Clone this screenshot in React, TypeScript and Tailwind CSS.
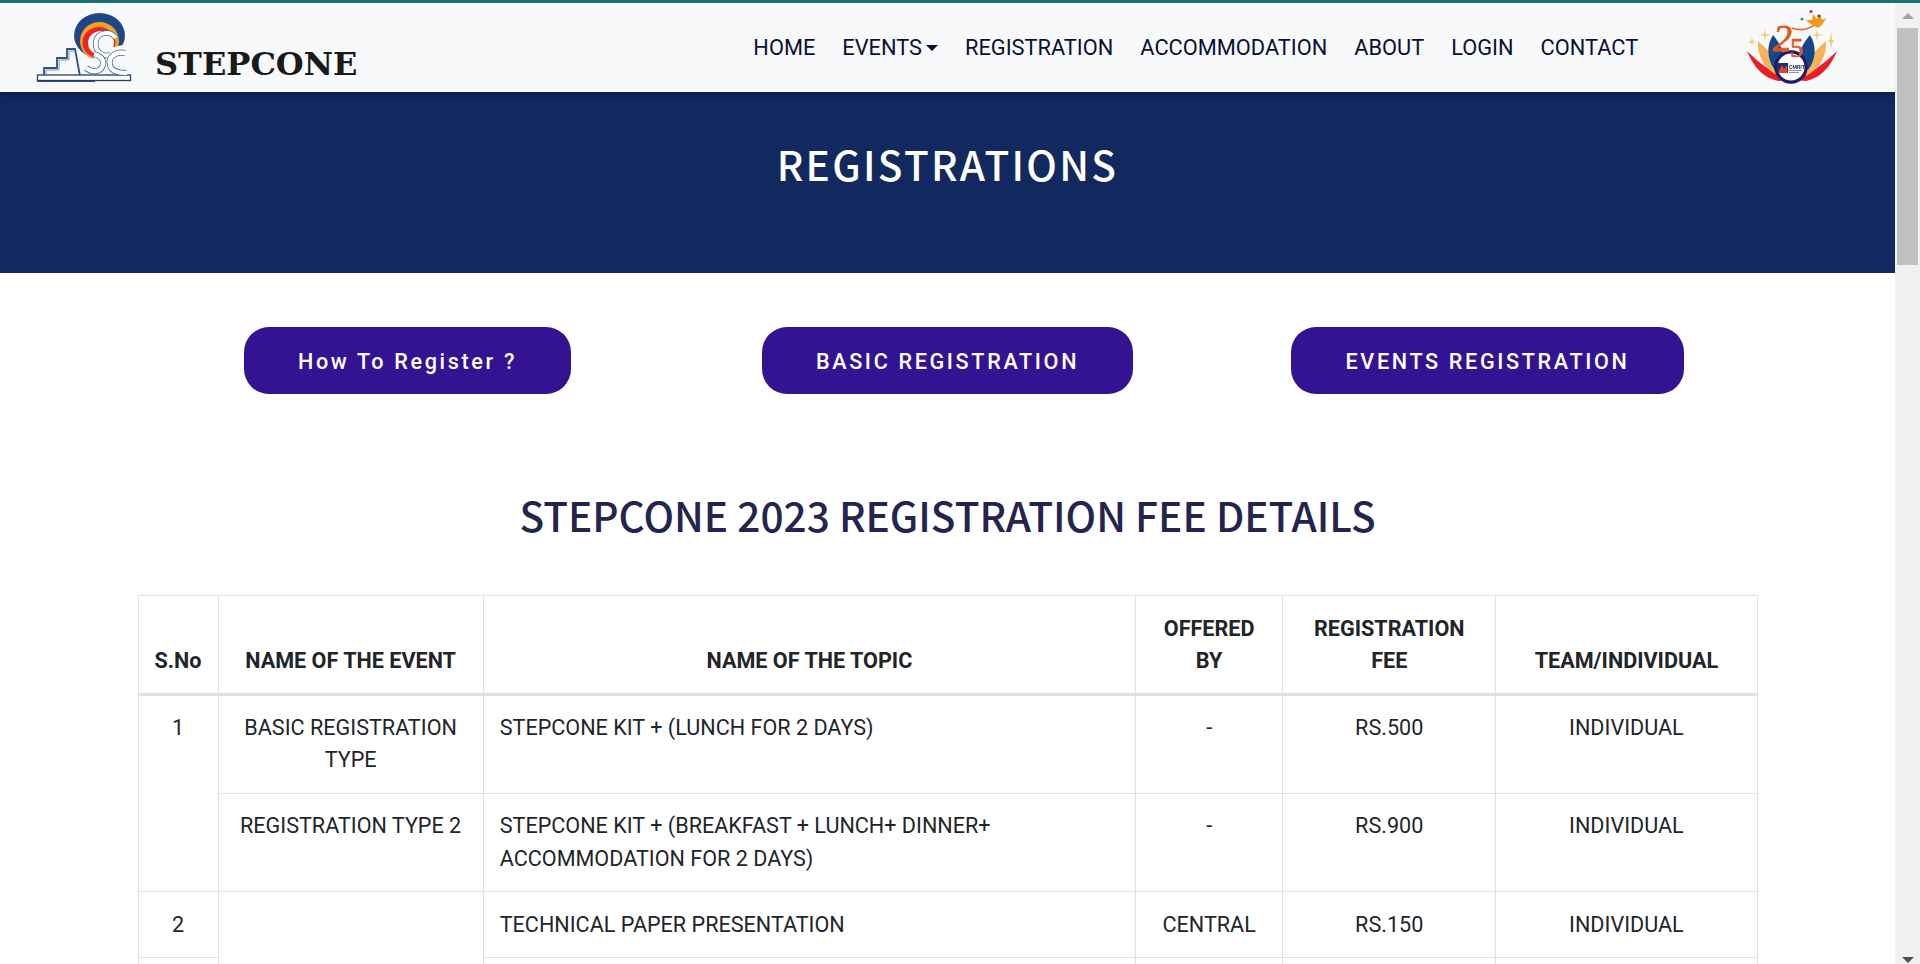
import React from "react";

function StepconeLogo() {
  return (
    <svg width="110" height="80" viewBox="0 0 110 80" className="shrink-0 blur-[0.4px]">
      <ellipse cx="69.5" cy="27.5" rx="25.5" ry="22.5" fill="#1f4788" />
      <ellipse cx="69.5" cy="33" rx="19.5" ry="19" fill="#f2a31d" />
      <ellipse cx="69" cy="34.5" rx="16.5" ry="15.5" fill="#e8262a" />
      <ellipse cx="71" cy="35" rx="13" ry="12" fill="#f8f9fa" />
      <path d="M62 53L66 45L84 39L97 36V62H62Z" fill="#f8f9fa" />
      <path d="M45 41H37V50H27V60H14V68H8V73H64V68H50Z" fill="#f8f9fa" stroke="#2f5088" strokeWidth="1.8" />
      <path d="M16 66V62H29V52H39V43H44" fill="none" stroke="#7f97bd" strokeWidth="1" />
      <rect x="7.5" y="67" width="93" height="5.5" fill="#ffffff" stroke="#1f3f75" strokeWidth="1.3" />
      <path d="M86 30C80 22 68 24 66 33C64 43 72 49 80 47" fill="none" stroke="#3b6aa8" strokeWidth="5.5" />
      <path d="M86 30C80 22 68 24 66 33C64 43 72 49 80 47" fill="none" stroke="#ffffff" strokeWidth="4" />
      <path d="M56 60C64 66 72 63 73 56C74 50 68 47 64 46" fill="none" stroke="#3b6aa8" strokeWidth="6" />
      <path d="M56 60C64 66 72 63 73 56C74 50 68 47 64 46" fill="none" stroke="#ffffff" strokeWidth="4.5" />
      <path d="M95 45C84 43 78 50 80 57C81 63 88 65 97 65" fill="none" stroke="#3b6aa8" strokeWidth="6" />
      <path d="M95 45C84 43 78 50 80 57C81 63 88 65 97 65" fill="none" stroke="#ffffff" strokeWidth="4.5" />
    </svg>
  );
}

function AnniversaryLogo() {
  return (
    <svg width="110" height="80" viewBox="0 0 110 80" className="shrink-0 blur-[0.3px]">
      <path d="M7 43C14 60 24 70 38 73L50 72C34 66 20 56 7 43Z" fill="#ee1c25" />
      <path d="M97 43C90 60 80 70 66 73L54 72C70 66 84 56 97 43Z" fill="#ee1c25" />
      <path d="M18 33C17 48 24 60 38 68L40 55C34 48 26 40 18 33Z" fill="#fbb25a" />
      <path d="M86 33C87 48 80 60 66 68L64 55C70 48 78 40 86 33Z" fill="#fbb25a" />
      <path d="M33 27C26 38 27 52 35 62L45 52C44 43 39 34 33 27Z" fill="#13498c" />
      <path d="M70 27C77 38 76 52 68 62L58 52C59 43 64 34 70 27Z" fill="#13498c" />
      <circle cx="51" cy="59" r="16.7" fill="#1c1a6b" />
      <circle cx="51" cy="59" r="13.5" fill="#ffffff" />
      <rect x="37" y="55" width="11" height="10" fill="#1c2f6f" />
      <path d="M38 65L42 57L44 61L47 57V65Z" fill="#e8432a" />
      <text x="49" y="60.5" fontSize="5.2" fontWeight="700" fill="#1c2f6f" fontFamily="Roboto, sans-serif">CMRIT</text>
      <rect x="49" y="62" width="13" height="1" fill="#8a93b5" />
      <rect x="49" y="64" width="10" height="1" fill="#8a93b5" />
      <text x="33" y="43" fontSize="38" fontStyle="italic" fill="#e4571b" stroke="#e4571b" strokeWidth="0.8" fontFamily="'Liberation Serif', serif">2</text>
      <text x="50" y="49" fontSize="27" fill="#e4571b" stroke="#e4571b" strokeWidth="0.7" fontFamily="'Liberation Serif', serif">5</text>
      <path d="M52 20C62 24 72 20 78 14" fill="none" stroke="#ea6a1c" strokeWidth="1.6" />
      <path d="M66 12C70 16 74 18 78 20C82 18 84 14 86 10L82 12L80 6L77 11L73 6L72 12Z" fill="#f39a1e" />
      <circle cx="62" cy="11" r="1.6" fill="#2a9d6f" />
      <circle cx="71" cy="3.5" r="1.6" fill="#e0242a" />
      <circle cx="79" cy="8" r="1.6" fill="#7c4a1e" />
      <path d="M25 21L26 26L31 27L26 28L25 33L24 28L19 27L24 26Z" fill="#f7c978" />
      <path d="M77 21L78 26L83 27L78 28L77 33L76 28L71 27L76 26Z" fill="#f7c978" />
      <path d="M91 23L92 31L94 33L92 35L91 42L90 35L88 33L90 31Z" fill="#f7c978" />
      <path d="M12 29L13 33L16 34L13 35L12 38L11 35L8 34L11 33Z" fill="#f7c978" />
    </svg>
  );
}

const navItems = ["HOME", "EVENTS", "REGISTRATION", "ACCOMMODATION", "ABOUT", "LOGIN", "CONTACT"];

function RegisterButton({ label }: { label: string }) {
  return (
    <div className="flex justify-center">
      <button className="h-[67px] rounded-[25px] bg-[#331391] px-[54px] pt-[3px] text-[21.6px] font-medium tracking-[2.65px] text-white">
        {label}
      </button>
    </div>
  );
}

const th = "border border-[#dee2e6] border-b-[3px] px-4 pt-[17px] pb-[15px] text-center align-bottom font-bold";
const td = "border border-[#dee2e6] px-4 py-[16.25px] align-top";
const tc = td + " text-center";

export default function App() {
  return (
    <div className="flex h-[964px] flex-col overflow-hidden bg-white font-['Roboto',sans-serif] text-[#212529]">
      <div className="h-[3px] shrink-0 bg-[#1a7277]" />
      <div className="flex min-h-0 flex-1">
        <div className="min-w-0 flex-1 overflow-hidden">
          <header className="relative z-10 flex h-[89px] items-start bg-[#f8f9fa] shadow-[0_2px_6px_rgba(0,0,0,0.35)]">
            <div className="ml-[30px] mt-[5px]">
              <StepconeLogo />
            </div>
            <span className="ml-[15px] mt-[42px] font-['DejaVu_Serif',serif] text-[32px] leading-[38px] font-bold text-[#1a1a1a]">
              STEPCONE
            </span>
            <nav className="ml-[396px] mt-[30px] flex gap-[27px] text-[21.8px] leading-[30px] text-[#0b1033]">
              {navItems.map((n) => (
                <a key={n} className="flex items-center">
                  {n}
                  {n === "EVENTS" && (
                    <span className="ml-[4px] h-0 w-0 border-x-[6px] border-t-[6px] border-x-transparent border-t-[#0b1033]" />
                  )}
                </a>
              ))}
            </nav>
            <div className="ml-auto mr-[45px] mt-[5px]">
              <AnniversaryLogo />
            </div>
          </header>

          <section className="flex h-[181px] justify-center bg-[#11295e] pt-[42px]">
            <h1 className="font-['Noto_Sans_CJK_SC',sans-serif] text-[40.6px] font-medium leading-[60px] tracking-[2.3px] text-white">
              REGISTRATIONS
            </h1>
          </section>

          <main className="mx-auto w-[1620px]">
            <div className="mt-[54px] grid grid-cols-3">
              <RegisterButton label="How To Register ?" />
              <RegisterButton label="BASIC REGISTRATION" />
              <RegisterButton label="EVENTS REGISTRATION" />
            </div>

            <h2 className="mt-[91px] text-center font-['Noto_Sans_CJK_SC',sans-serif] text-[40.6px] font-medium leading-[60px] text-[#24244f]">
              STEPCONE 2023 REGISTRATION FEE DETAILS
            </h2>

            <table className="mt-[50px] w-[1620px] table-fixed border-collapse text-[21.6px] leading-[32.4px]">
              <colgroup>
                <col className="w-[80px]" />
                <col className="w-[265px]" />
                <col className="w-[652px]" />
                <col className="w-[147px]" />
                <col className="w-[213px]" />
                <col className="w-[261px]" />
              </colgroup>
              <thead>
                <tr>
                  <th className={th}>S.No</th>
                  <th className={th}>NAME OF THE EVENT</th>
                  <th className={th}>NAME OF THE TOPIC</th>
                  <th className={th}>OFFERED BY</th>
                  <th className={th}>REGISTRATION FEE</th>
                  <th className={th}>TEAM/INDIVIDUAL</th>
                </tr>
              </thead>
              <tbody>
                <tr>
                  <td className={tc} rowSpan={2}>1</td>
                  <td className={tc}>BASIC REGISTRATION TYPE</td>
                  <td className={td}>STEPCONE KIT + (LUNCH FOR 2 DAYS)</td>
                  <td className={tc}>-</td>
                  <td className={tc}>RS.500</td>
                  <td className={tc}>INDIVIDUAL</td>
                </tr>
                <tr>
                  <td className={tc}>REGISTRATION TYPE 2</td>
                  <td className={td}>
                    STEPCONE KIT + (BREAKFAST + LUNCH+ DINNER+
                    <br />
                    ACCOMMODATION FOR 2 DAYS)
                  </td>
                  <td className={tc}>-</td>
                  <td className={tc}>RS.900</td>
                  <td className={tc}>INDIVIDUAL</td>
                </tr>
                <tr>
                  <td className={tc}>2</td>
                  <td className={tc} rowSpan={2}></td>
                  <td className={td}>TECHNICAL PAPER PRESENTATION</td>
                  <td className={tc}>CENTRAL</td>
                  <td className={tc}>RS.150</td>
                  <td className={tc}>INDIVIDUAL</td>
                </tr>
                <tr>
                  <td className={tc}>&nbsp;</td>
                  <td className={td}>&nbsp;</td>
                  <td className={tc}>&nbsp;</td>
                  <td className={tc}>&nbsp;</td>
                  <td className={tc}>&nbsp;</td>
                </tr>
              </tbody>
            </table>
          </main>
        </div>

        <div className="flex w-[25px] shrink-0 flex-col items-center bg-[#f1f1f1]">
          <span className="mt-[10px] h-0 w-0 border-x-[6px] border-b-[6px] border-x-transparent border-b-[#a3a3a3]" />
          <div className="mt-[9px] h-[237px] w-[21px] bg-[#c1c1c1]" />
          <span className="mt-auto mb-[1px] h-0 w-0 border-x-[6px] border-t-[6px] border-x-transparent border-t-[#505050]" />
        </div>
      </div>
    </div>
  );
}
